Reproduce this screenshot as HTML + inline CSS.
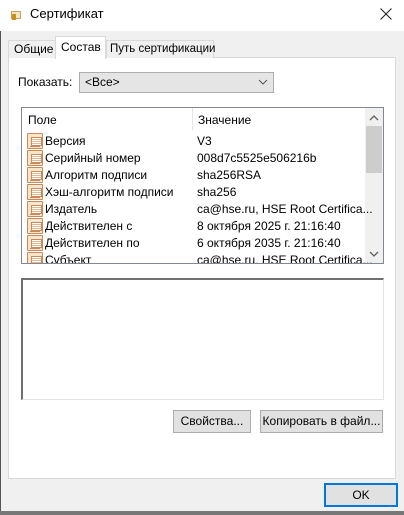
<!DOCTYPE html>
<html><head><meta charset="utf-8"><style>
*{margin:0;padding:0;box-sizing:border-box}
body{width:404px;height:515px;background:#f0f0f0;font-family:"Segoe UI","Liberation Sans","DejaVu Sans",sans-serif;font-size:12px;color:#000;position:relative;overflow:hidden;white-space:nowrap}
.a{position:absolute}
.title{left:0;top:0;width:404px;height:31px;background:#fff}
.btn{background:#e1e1e1;border:1px solid #adadad;text-align:center;line-height:20px}
.ic{position:absolute;left:5px;width:16px;height:16px;background:#f6e6cc;border:1px solid #c88a5c;border-radius:1px}
.ic:before{content:"";position:absolute;left:3px;top:3px;width:9px;height:7px;border:1px solid #c88a5c;background:repeating-linear-gradient(#fff 0 1px,#e0b890 1px 2px)}
.ic:after{content:"";position:absolute;left:2px;top:12px;width:10px;height:1px;background:#c88a5c}
.row{position:absolute;left:0;height:17px;width:343px;line-height:17px}
.row .f{position:absolute;left:23px}
.row .v{position:absolute;left:175px;white-space:nowrap}
</style></head><body>
<div class="a" style="left:0;top:0;width:1px;height:515px;background:#555"></div>
<div class="a title"></div>
<div class="a" style="left:11px;top:11px;width:10px;height:8px;background:#f2e4c4;border:1px solid #c8a060"></div>
<div class="a" style="left:12px;top:14px;width:4px;height:6px;background:#c89018"></div>
<div class="a" style="left:30px;top:6px;font-size:13px">Сертификат</div>
<svg class="a" style="left:380px;top:8px" width="12" height="12"><path d="M0.5 0.5l11 11M11.5 0.5l-11 11" stroke="#222" stroke-width="1"/></svg>
<!-- panel -->
<div class="a" style="left:8px;top:57px;width:388px;height:422px;background:#fff;border:1px solid #d9d9d9"></div>
<!-- tabs -->
<div class="a" style="left:8px;top:40px;width:48px;height:18px;background:#f0f0f0;border:1px solid #d9d9d9;border-bottom:none;line-height:17px;padding-left:5px">Общие</div>
<div class="a" style="left:106px;top:40px;width:108px;height:18px;background:#f0f0f0;border:1px solid #d9d9d9;border-bottom:none;line-height:17px;padding-left:3px;font-size:11.5px">Путь сертификации</div>
<div class="a" style="left:55px;top:36px;width:51px;height:23px;background:#fff;border:1px solid #d9d9d9;border-bottom:none;line-height:20px;padding-left:5px">Состав</div>
<div class="a" style="left:18px;top:75px">Показать:</div>
<div class="a" style="left:79px;top:72px;width:195px;height:21px;background:#e5e5e5;border:1px solid #adadad;line-height:19px;padding-left:5px">&lt;Все&gt;</div>
<svg class="a" style="left:258px;top:78px" width="10" height="8"><path d="M1 2l4 4 4-4" fill="none" stroke="#555" stroke-width="1"/></svg>
<!-- list -->
<div class="a" style="left:21px;top:107px;width:363px;height:157px;border:1px solid #828790;background:#fff;overflow:hidden">
 <div class="a" style="left:6px;top:5px">Поле</div>
 <div class="a" style="left:170px;top:0;width:1px;height:22px;background:#e5e5e5"></div>
 <div class="a" style="left:176px;top:5px">Значение</div>
 <div class="a" style="left:343px;top:0;width:18px;height:155px;background:#f0f0f0"></div>
 <div class="a" style="left:344px;top:18px;width:16px;height:47px;background:#cdcdcd"></div>
 <svg class="a" style="left:347px;top:6px" width="10" height="8"><path d="M1 6l4-4 4 4" fill="none" stroke="#606060" stroke-width="1.3"/></svg>
 <svg class="a" style="left:347px;top:142px" width="10" height="8"><path d="M1 2l4 4 4-4" fill="none" stroke="#606060" stroke-width="1.3"/></svg>
 <div class="row" style="top:25px"><div class="ic" style="top:0"></div><span class="f">Версия</span><span class="v">V3</span></div>
 <div class="row" style="top:42px"><div class="ic"></div><span class="f">Серийный номер</span><span class="v">008d7c5525e506216b</span></div>
 <div class="row" style="top:59px"><div class="ic"></div><span class="f">Алгоритм подписи</span><span class="v">sha256RSA</span></div>
 <div class="row" style="top:76px"><div class="ic"></div><span class="f">Хэш-алгоритм подписи</span><span class="v">sha256</span></div>
 <div class="row" style="top:93px"><div class="ic"></div><span class="f">Издатель</span><span class="v">ca@hse.ru, HSE Root Certifica...</span></div>
 <div class="row" style="top:110px"><div class="ic"></div><span class="f">Действителен с</span><span class="v">8 октября 2025 г. 21:16:40</span></div>
 <div class="row" style="top:127px"><div class="ic"></div><span class="f">Действителен по</span><span class="v">6 октября 2035 г. 21:16:40</span></div>
 <div class="row" style="top:144px"><div class="ic"></div><span class="f">Субъект</span><span class="v">ca@hse.ru, HSE Root Certifica...</span></div>
</div>
<!-- detail -->
<div class="a" style="left:21px;top:278px;width:363px;height:122px;border:1px solid #e3e3e3;border-top:2px solid #707070;border-left:2px solid #707070;background:#fff"></div>
<div class="a btn" style="left:173px;top:410px;width:78px;height:23px">Свойства...</div>
<div class="a btn" style="left:260px;top:410px;width:123px;height:23px">Копировать в файл...</div>
<div class="a btn" style="left:324px;top:483px;width:74px;height:24px;border:2px solid #0078d7;line-height:20px">OK</div>
<div class="a" style="left:0;top:511px;width:404px;height:4px;background:#777"></div>
</body></html>
